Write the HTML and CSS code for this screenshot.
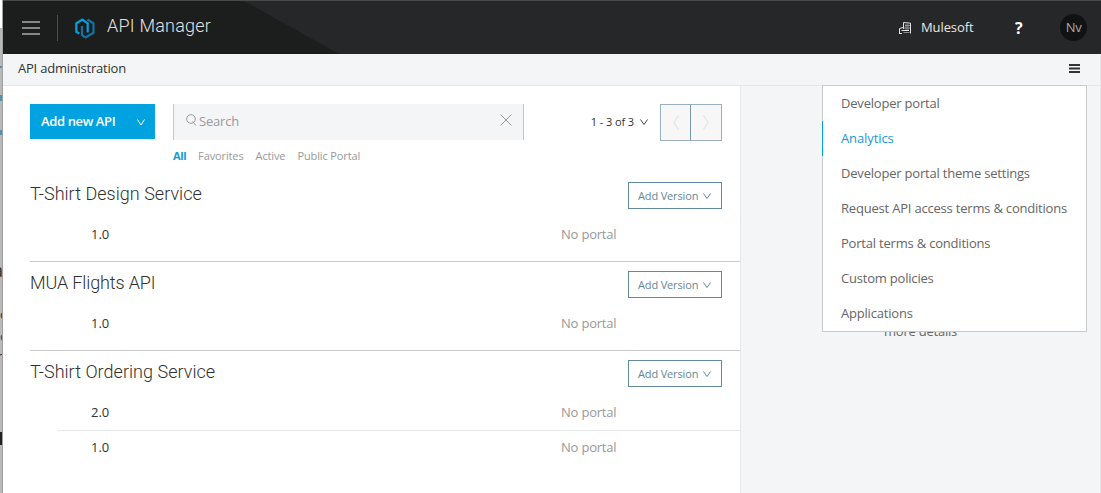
FILE: index.html
```html
<!DOCTYPE html>
<html lang="en">
<head>
<meta charset="utf-8">
<title>API Manager</title>
<link rel="stylesheet" href="styles.css">
</head>
<body>
<div class="screen">
  <div class="backdrop">
    <span class="peek peek-dot"></span>
    <span class="peek peek-link"></span>
    <span class="peek peek-link2"></span>
    <span class="peek peek-title">a</span>
    <span class="peek peek-c">c</span>
    <span class="peek peek-blue">c</span>
    <span class="peek peek-r">r</span>
    <span class="peek peek-bar"></span>
  </div>
  <div class="window">
    <header class="topbar">
      <svg class="slant" width="336" height="53" viewBox="0 0 336 53"><path d="M0 0H241L336 53H0z" fill="#1c1d1d"/></svg>
      <div class="brand">
        <svg class="burger" width="18" height="14" viewBox="0 0 18 14"><path d="M0 1h18M0 7h18M0 13h18" stroke="#a9aaaa" stroke-width="1.3"/></svg>
        <span class="divider"></span>
        <svg class="logo" width="20" height="21" viewBox="0 0 20 21" fill="none" stroke-width="2.2"><path d="M12.500 1.500L18.500 5.300V14.800L10.500 19.400L7 17.200V8" stroke="#14709f"/><path d="M4.300 15.600L1.300 13.800V5.300L7.300 1.500L12.700 5.300V14.500" stroke="#00a2df"/></svg>
        <h1 class="product">API Manager</h1>
      </div>
      <div class="account">
        <svg class="org" width="12" height="13" viewBox="0 0 12 13"><path d="M.5 12.500V7.500L4 6.500M4.500 8V1.500L11.500 2.200V12.500M0 12.500H3M2.500 9.500H10" stroke="#e2e2e2"/><path d="M6 4.500h5M4.500 7h6.500M4.500 11.500h6M7 3v6M9 3v6" stroke="#a8a8a8" stroke-width=".8"/></svg>
        <span class="org-name">Mulesoft</span>
        <span class="help">?</span>
        <span class="avatar">Nv</span>
      </div>
    </header>
    <div class="crumbs">
      <span>API administration</span>
      <svg width="11" height="9" viewBox="0 0 11 9"><path d="M0 1h11M0 4.500h11M0 8h11" stroke="#333" stroke-width="1.8"/></svg>
    </div>
    <div class="body">
      <main class="main">
        <div class="toolbar">
          <button class="add"><span>Add new API</span><svg width="8" height="7" viewBox="0 0 8 7"><path d="M.5 .5L4 6L7.500 .5"/></svg></button>
          <div class="search">
            <svg class="lens" width="11" height="12" viewBox="0 0 11 12"><circle cx="5" cy="5" r="4.300"/><path d="M6.500 7.500L10 11.500"/></svg>
            <span>Search</span>
            <svg class="clear" width="12" height="12" viewBox="0 0 12 12"><path d="M.5 .5l11 11M11.500 .5l-11 11"/></svg>
          </div>
          <div class="pager">
            <span class="range">1 - 3 of 3</span>
            <svg class="down" width="8" height="6" viewBox="0 0 8 6"><path d="M.5 .5L4 5.500L7.500 .5"/></svg>
            <div class="steps">
              <span><svg width="6" height="15" viewBox="0 0 6 15"><path d="M5.500 .5L1 7.500L5.500 14.500"/></svg></span>
              <span><svg width="6" height="15" viewBox="0 0 6 15"><path d="M.5 .5L5 7.500L.5 14.500"/></svg></span>
            </div>
          </div>
        </div>
        <nav class="filters"><b>All</b><span>Favorites</span><span>Active</span><span>Public Portal</span></nav>
        <section class="api">
          <div class="api-head"><h2>T-Shirt Design Service</h2><button class="version">Add Version<svg width="8" height="6" viewBox="0 0 8 6"><path d="M.5 .5L4 5.500L7.500 .5"/></svg></button></div>
          <div class="row"><span class="num">1.0</span><span class="portal">No portal</span></div>
        </section>
        <section class="api">
          <div class="api-head"><h2 class="flights">MUA Flights API</h2><button class="version">Add Version<svg width="8" height="6" viewBox="0 0 8 6"><path d="M.5 .5L4 5.500L7.500 .5"/></svg></button></div>
          <div class="row"><span class="num">1.0</span><span class="portal">No portal</span></div>
        </section>
        <section class="api">
          <div class="api-head"><h2>T-Shirt Ordering Service</h2><button class="version">Add Version<svg width="8" height="6" viewBox="0 0 8 6"><path d="M.5 .5L4 5.500L7.500 .5"/></svg></button></div>
          <div class="row"><span class="num">2.0</span><span class="portal">No portal</span></div>
          <div class="row ruled"><span class="num">1.0</span><span class="portal">No portal</span></div>
        </section>
      </main>
      <aside class="side"><p>more details</p></aside>
    </div>
    <ul class="menu">
      <li>Developer portal</li>
      <li class="active">Analytics</li>
      <li>Developer portal theme settings</li>
      <li>Request API access terms &amp; conditions</li>
      <li>Portal terms &amp; conditions</li>
      <li>Custom policies</li>
      <li>Applications</li>
    </ul>
  </div>
</div>
</body>
</html>
```

FILE: styles.css
```css
* { box-sizing: border-box; }
body { margin: 0; font-family: "Open Sans", sans-serif; font-size: 13px; color: #333; }
h1, h2, p, ul { margin: 0; padding: 0; font-weight: 400; }
button { font-family: inherit; cursor: pointer; }
svg { display: block; fill: none; flex: none; }
.screen { display: flex; width: 1101px; height: 493px; overflow: hidden; }
.backdrop { position: relative; width: 3px; overflow: hidden; background: linear-gradient(#fff 28px, #b9b9b9 28px); border-right: 1px solid #a0a0a0; }
.peek { position: absolute; left: 0; line-height: 20px; }
.peek-dot, .peek-link, .peek-link2 { width: 2px; background: #4c93b5; }
.peek-dot { top: 66px; height: 2px; }
.peek-link { top: 95px; height: 6px; }
.peek-link2 { top: 130px; height: 5px; }
.peek-title { top: 260px; left: -7px; font-size: 18px; }
.peek-c { top: 304px; }
.peek-blue { top: 326px; color: #1763a0; font-weight: 700; }
.peek-r { top: 346px; left: -3px; }
.peek-bar { top: 432px; width: 3px; height: 13px; background: #222; }
.window { position: relative; flex: 1; display: flex; flex-direction: column; background: #fff; }
.topbar { position: relative; display: flex; justify-content: space-between; align-items: center; height: 54px; background: #262729; border-top: 1px solid #484a4a; }
.slant { position: absolute; left: 0; top: 0; }
.brand { position: relative; display: flex; align-items: center; padding-left: 19px; }
.divider { width: 1px; height: 26px; margin: 1px 17px 0 17px; background: #4d4e4e; }
.logo { margin-top: 1px; }
.product { margin-left: 12px; font: 300 18px/26px Roboto, sans-serif; letter-spacing: .22px; color: #e2e2e2; margin-top: -3px; }
.account { display: flex; align-items: center; padding-right: 14px; color: #e6e6e6; }
.org-name { margin: -1px 0 0 10px; width: 53px; letter-spacing: -.1px; }
.help { margin-left: 41px; width: 9px; font-size: 16px; font-weight: 700; color: #fff; }
.avatar { display: flex; align-items: center; justify-content: center; width: 27px; height: 27px; margin-left: 36px; padding-bottom: 2px; border-radius: 50%; background: #111213; color: #aaa; font-size: 13px; letter-spacing: -.3px; }
.crumbs { display: flex; justify-content: space-between; align-items: center; height: 32px; padding: 0 20px 3px 15px; background: #f4f5f7; border-bottom: 1px solid #e6e7e8; border-right: 1px solid #e8e8e8; letter-spacing: -.22px; }
.crumbs span { margin-top: -1px; }
.crumbs svg { margin-top: 1px; }
.body { flex: 1; display: flex; }
.main { width: 737px; padding: 18px 0 0 27px; }
.toolbar { display: flex; align-items: flex-start; padding-right: 18px; }
.add { display: flex; align-items: center; justify-content: space-between; width: 125px; height: 35px; padding: 0 10px 1px 11px; border: 0; background: #00a2df; color: #fff; font-size: 13px; font-weight: 600; letter-spacing: -.38px; }
.add svg { stroke: #fff; margin-top: 2px; }
.search { display: flex; align-items: center; width: 351px; height: 36px; margin-left: 18px; padding: 0 11px 0 12px; background: #f4f5f7; border: solid #c6c8ca; border-width: 0 1px; color: #999; letter-spacing: -.2px; }
.search svg { stroke: #999; }
.search span { margin: -2px 0 0 2px; }
.lens { margin-top: -4px; }
.clear { margin: -4px 0 0 auto; }
.pager { display: flex; align-items: center; margin-left: auto; font-size: 11px; }
.range { margin-top: -2px; letter-spacing: -.1px; }
.down { margin: -2px 12px 0 6px; stroke: #444; }
.steps { display: flex; width: 62px; height: 37px; border: 1px solid #9ab0be; background: #f7f7f8; }
.steps span { width: 29px; display: flex; align-items: center; justify-content: center; stroke: #ddd; }
.steps span + span { width: 31px; border-left: 1px solid #7896a8; }
.filters { display: flex; gap: 12px; height: 41px; padding: 7px 0 0 143px; font-size: 11px; line-height: 16px; letter-spacing: -.12px; color: #999; }
.filters b { color: #1499d8; letter-spacing: -.4px; }
.api { padding-bottom: 9px; }
.api + .api { border-top: 1px solid #c8cacc; }
.api-head { display: flex; justify-content: space-between; align-items: flex-start; height: 44px; padding: 9px 18px 0 0; }
.api:first-of-type .api-head { height: 35px; padding-top: 0; }
h2 { margin-top: -1px; font: 300 18px/25px Roboto, sans-serif; letter-spacing: .03px; color: #303030; }
.flights { letter-spacing: -.13px; }
.version { display: flex; align-items: center; justify-content: space-between; width: 94px; height: 27px; padding: 0 10px 0 9px; border: 1px solid #648a9e; background: #fff; color: #668699; font-size: 11px; letter-spacing: -.15px; }
.version svg { stroke: #668699; }
.row { display: flex; align-items: center; height: 35px; margin-left: 27px; padding: 0 0 2px 34px; }
.ruled { border-top: 1px solid #e6e7e8; }
.num { width: 470px; }
.portal { color: #999; letter-spacing: -.2px; }
.side { flex: 1; background: #f4f5f7; border: solid #e8e8e8; border-width: 0 1px; }
.side p { padding: 236px 0 0 143px; line-height: 18px; letter-spacing: -.22px; color: #666; }
.menu { position: absolute; left: 819px; top: 85px; width: 265px; height: 247px; border: 1px solid #c8cacc; background: #fff; list-style: none; color: #666; letter-spacing: -.2px; }
.menu li { height: 35px; margin-left: -1px; padding-left: 19px; line-height: 35px; white-space: nowrap; }
.menu .active { border-left: 1px solid #00a2df; padding-left: 18px; color: #1499d8; letter-spacing: -.1px; }
```
